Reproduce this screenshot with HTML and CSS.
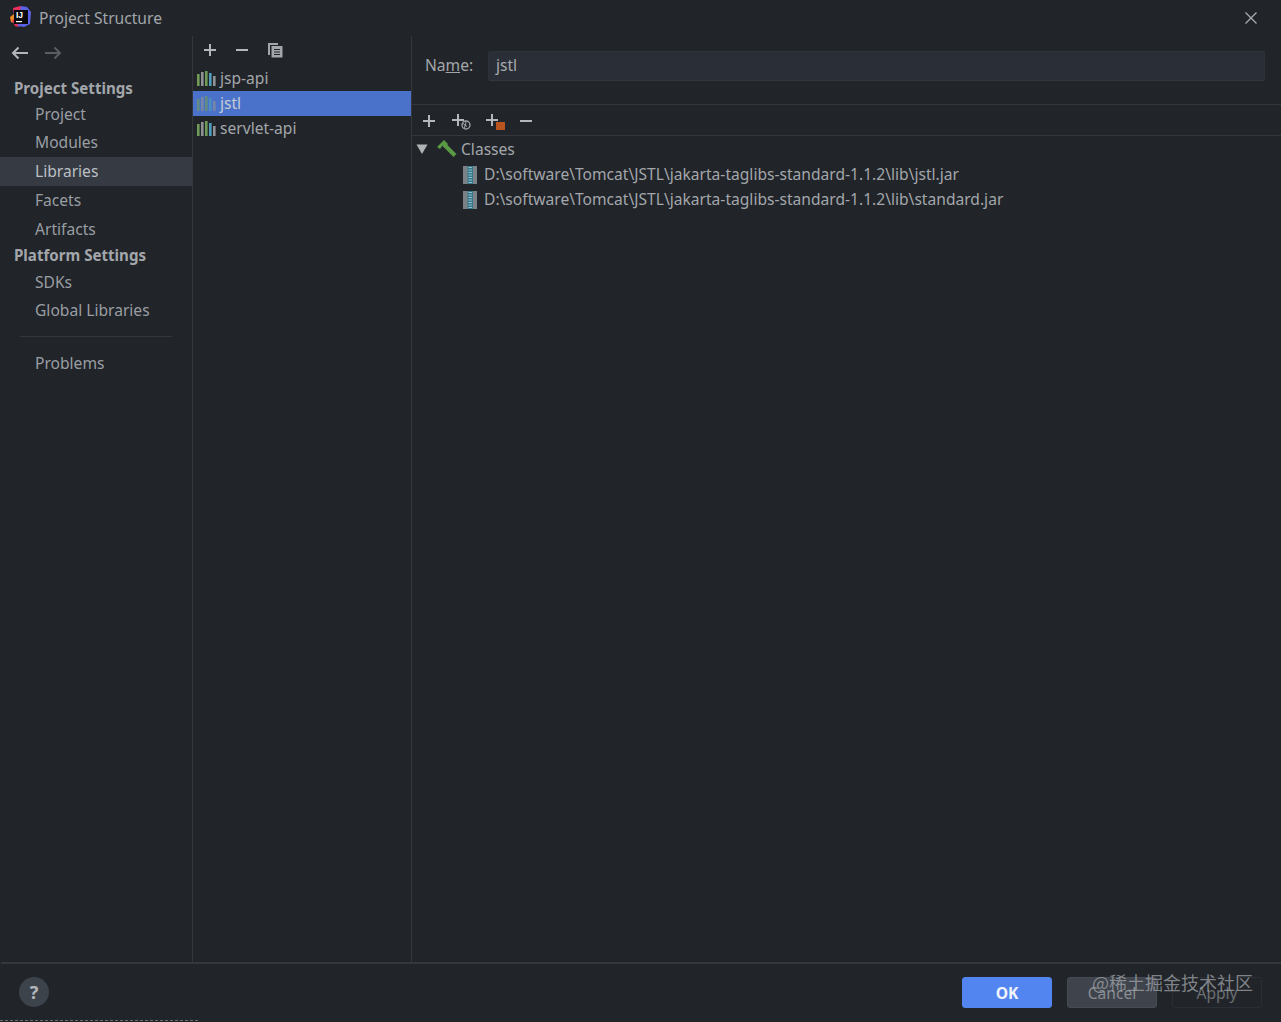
FILE: index.html
```html
<!DOCTYPE html>
<html lang="en">
<head>
<meta charset="utf-8">
<title>Project Structure</title>
<link rel="stylesheet" href="styles.css">
</head>
<body>
<div class="window">
  <header class="titlebar">
    <svg class="logo" width="22" height="22" viewBox="0 0 22 22">
      <path d="M4 2 L11 0 L15 3 L5 9 Z" fill="#e8305f"/>
      <path d="M1 11 L5 8 L6 17 L2 16 Z" fill="#f08a24"/>
      <path d="M12 0 L18 1 L22 6 L21 18 L15 21 L8 20 Z" fill="#5a63e8"/>
      <path d="M3 14 L6 13 L10 21 L6 20 Z" fill="#e8305f"/>
      <rect x="5" y="4" width="14" height="14" fill="#0b0b0d"/>
      <text x="7" y="12" class="logo-text">IJ</text>
      <rect x="7" y="15" width="6" height="1.2" fill="#fff"/>
    </svg>
    <span class="title">Project Structure</span>
    <svg class="close" width="14" height="14" viewBox="0 0 14 14"><path d="M1.5 1.5 L12.5 12.5 M12.5 1.5 L1.5 12.5" stroke="#a9acb0" stroke-width="1.3" fill="none"/></svg>
  </header>
  <main class="main">
    <nav class="nav">
      <div class="nav-arrows">
        <svg width="18" height="14" viewBox="0 0 18 14"><path d="M17 7 H2 M7.5 1.5 L2 7 L7.5 12.5" stroke="#b4b7ba" stroke-width="2" fill="none"/></svg>
        <svg width="18" height="14" viewBox="0 0 18 14"><path d="M1 7 H16 M10.5 1.5 L16 7 L10.5 12.5" stroke="#5a5d61" stroke-width="2" fill="none"/></svg>
      </div>
      <div class="nav-heading first">Project Settings</div>
      <div class="nav-item">Project</div>
      <div class="nav-item">Modules</div>
      <div class="nav-item active">Libraries</div>
      <div class="nav-item">Facets</div>
      <div class="nav-item">Artifacts</div>
      <div class="nav-heading">Platform Settings</div>
      <div class="nav-item short">SDKs</div>
      <div class="nav-item short">Global Libraries</div>
      <div class="nav-sep"></div>
      <div class="nav-item short">Problems</div>
    </nav>
    <section class="libs">
      <div class="libs-tools">
        <svg width="14" height="14" viewBox="0 0 14 14"><path d="M7 1 V13 M1 7 H13" stroke="#b4b7ba" stroke-width="2"/></svg>
        <svg width="14" height="14" viewBox="0 0 14 14"><path d="M1 7 H13" stroke="#b4b7ba" stroke-width="2"/></svg>
        <svg width="16" height="16" viewBox="0 0 16 16"><path d="M1 1 H11 V3 H3 V13 H1 Z" fill="#a3a6aa"/><path d="M4.5 4 H15.5 V15.5 H4.5 Z" fill="#a3a6aa"/><path d="M7 7.5 H13 M7 10 H13 M7 12.5 H13" stroke="#212429" stroke-width="1"/></svg>
      </div>
      <div class="lib-row"><svg class="lib-icon" width="19" height="15" viewBox="0 0 19 15"><use href="#bars"/></svg><span class="lib-name">jsp-api</span></div>
      <div class="lib-row selected"><svg class="lib-icon dim" width="19" height="15" viewBox="0 0 19 15"><use href="#bars"/></svg><span class="lib-name">jstl</span></div>
      <div class="lib-row"><svg class="lib-icon" width="19" height="15" viewBox="0 0 19 15"><use href="#bars"/></svg><span class="lib-name">servlet-api</span></div>
    </section>
    <section class="detail">
      <div class="name-row">
        <label class="name-label">Na<u>m</u>e:</label>
        <div class="name-input">jstl</div>
      </div>
      <div class="tree-tools">
        <svg width="14" height="14" viewBox="0 0 14 14"><path d="M7 1 V13 M1 7 H13" stroke="#b4b7ba" stroke-width="2"/></svg>
        <svg width="20" height="18" viewBox="0 0 20 18"><path d="M7 2 V14 M1 8 H13" stroke="#b4b7ba" stroke-width="2"/><circle cx="15" cy="13" r="4" fill="#212429" stroke="#a3a6aa" stroke-width="1.3"/><path d="M12 11.5 L16 14.5 M15 10 L13.5 16" stroke="#a3a6aa" stroke-width="1"/></svg>
        <svg class="tree-folder" width="20" height="18" viewBox="0 0 20 18"><path d="M7 2 V14 M1 8 H13" stroke="#b4b7ba" stroke-width="2"/><rect x="11" y="10" width="9" height="8" fill="#b9531f"/></svg>
        <svg class="tree-minus" width="14" height="14" viewBox="0 0 14 14"><path d="M1 7 H13" stroke="#b4b7ba" stroke-width="2"/></svg>
      </div>
      <div class="tree-row">
        <svg class="caret" width="12" height="10" viewBox="0 0 12 10"><path d="M0.5 0.5 H11.5 L6 10 Z" fill="#b0b3b6"/></svg>
        <svg class="hammer" width="20" height="18" viewBox="0 0 20 18"><path d="M0 7 L7 0 L11 4 L8 7.5 L5.5 5.5 L3 9 Z" fill="#5a9a45"/><path d="M7 4.5 L18 15.5" stroke="#5a9a45" stroke-width="4"/></svg>
        <span>Classes</span>
      </div>
      <div class="tree-row leaf"><svg class="jar" width="14" height="18" viewBox="0 0 14 18"><use href="#jar"/></svg><span>D:\software\Tomcat\JSTL\jakarta-taglibs-standard-1.1.2\lib\jstl.jar</span></div>
      <div class="tree-row leaf"><svg class="jar" width="14" height="18" viewBox="0 0 14 18"><use href="#jar"/></svg><span>D:\software\Tomcat\JSTL\jakarta-taglibs-standard-1.1.2\lib\standard.jar</span></div>
    </section>
  </main>
  <footer class="footer">
    <div class="help">?</div>
    <div class="buttons">
      <div class="btn primary">OK</div>
      <div class="btn">Cancel</div>
      <div class="btn ghost">Apply</div>
    </div>
  </footer>
</div>
<div class="watermark">@稀土掘金技术社区</div>
<div class="scan-line"></div>
<svg class="defs" width="0" height="0">
  <defs>
    <g id="bars">
      <rect x="0" y="3" width="2.6" height="12" fill="#6f9a57"/>
      <rect x="4" y="1" width="2.6" height="14" fill="#8f9295"/>
      <rect x="8" y="0" width="2.6" height="15" fill="#6f9a57"/>
      <rect x="12" y="2" width="2.6" height="13" fill="#4f9dbd"/>
      <rect x="16" y="5" width="2.6" height="10" fill="#8f9295"/>
    </g>
    <g id="jar">
      <rect x="0" y="0" width="14" height="18" fill="#7a8187"/>
      <rect x="4.5" y="0" width="5.5" height="18" fill="#37788a"/>
      <path d="M5.5 1.5 H9 M5.5 4 H9 M5.5 6.5 H9 M5.5 9 H9 M5.5 11.5 H9 M5.5 14 H9 M5.5 16.5 H9" stroke="#8fc0cc" stroke-width="1"/>
    </g>
  </defs>
</svg>
</body>
</html>
```

FILE: styles.css
```css
* { box-sizing: border-box; }
html, body { margin: 0; padding: 0; background: #212429; }
body {
  font-family: "Noto Sans", "Open Sans", sans-serif;
  font-size: 15.6px;
  color: #a7abaf;
  width: 1281px;
  height: 1022px;
  overflow: hidden;
  position: relative;
}
.window { display: flex; flex-direction: column; height: 1022px; }

.titlebar { height: 36px; display: flex; align-items: center; padding-left: 9px; flex: none; }
.logo { flex: none; margin-top: -2px; }
.logo-text { font-family: "Liberation Sans", sans-serif; font-size: 8.5px; font-weight: 700; fill: #fff; }
.title { margin-left: 8px; color: #a2a6aa; }
.close { margin-left: auto; margin-right: 23px; }

.main { flex: none; display: flex; min-height: 0; height: 926px; }
.nav { width: 193px; flex: none; border-right: 1px solid #34383e; }
.nav-arrows { height: 39px; display: flex; align-items: center; gap: 15px; padding: 0 0 6px 11px; }
.nav-heading { padding-left: 14px; font-size: 15.1px; font-weight: 700; color: #a3a7ab; height: 23.5px; line-height: 25px; }
.nav-heading.first { height: 24.5px; line-height: 26px; }
.nav-item { padding-left: 35px; height: 28.75px; line-height: 29.75px; color: #9a9ea3; }
.nav-item.short { height: 28px; line-height: 30px; }
.nav-item.active { background: #353a43; color: #bcc0c4; }
.nav-sep { height: 1px; margin: 13px 20px 11px 20px; background: #34383e; }

.libs { width: 219px; flex: none; border-right: 1px solid #34383e; }
.libs-tools { height: 30px; display: flex; align-items: center; gap: 18px; padding: 0 0 3px 10px; }
.lib-row { height: 25px; display: flex; align-items: center; padding-left: 4px; color: #a3a7ab; }
.lib-row.selected { background: #4a72ca; color: #c5cad4; }
.lib-icon { margin-right: 4px; flex: none; margin-top: -1px; }
.lib-icon.dim { opacity: 0.65; }
.lib-name { margin-top: -2px; }

.detail { flex: 1; min-width: 0; }
.name-row { height: 69px; padding: 15px 16px 0 13px; display: flex; align-items: flex-start; border-bottom: 1px solid #34383e; }
.name-label { width: 63px; flex: none; line-height: 28px; color: #a3a7ab; }
.name-input { flex: 1; height: 30px; line-height: 26px; padding-left: 7px; background: #2a2e36; border: 1px solid #2d3139; border-bottom-color: #34383e; color: #a7abaf; border-radius: 2px; }
.tree-tools { height: 31px; display: flex; align-items: center; padding: 2px 0 0 10px; gap: 15px; border-bottom: 1px solid #34383e; }
.tree-tools .tree-folder { margin-left: -1px; }
.tree-tools .tree-minus { margin-left: -1px; }
.tree-row { height: 25px; display: flex; align-items: center; color: #a3a7ab; }
.caret { margin-left: 4px; flex: none; }
.hammer { margin-left: 9px; margin-right: 4px; flex: none; }
.leaf { padding-left: 51px; }
.jar { margin-right: 7px; flex: none; margin-top: 2px; }

.footer { height: 60px; flex: none; border-top: 2px solid #34383e; display: flex; align-items: center; padding: 0 19px 2px 18px; margin-left: 1px; }
.help { width: 30px; height: 30px; border-radius: 50%; background: #3d434b; color: #b4b7ba; font-size: 18px; font-weight: 700; text-align: center; line-height: 30px; }
.buttons { margin-left: auto; display: flex; gap: 15px; }
.btn { width: 90px; height: 31px; line-height: 31px; text-align: center; border-radius: 3px; background: #3e434c; border: 1px solid #464b53; color: #8a8e93; }
.btn.primary { background: #5385f0; border-color: #5385f0; color: #f0f4fb; font-weight: 700; }
.btn.ghost { background: #212429; border-color: #2b2f35; color: #6b6f74; }

.watermark { position: absolute; left: 1092px; top: 969px; font-family: "Noto Sans CJK SC", sans-serif; font-size: 18px; line-height: 26px; color: rgba(170, 174, 178, 0.7); white-space: nowrap; }
.scan-line { position: absolute; left: 0; bottom: 1px; width: 200px; height: 1px; background: repeating-linear-gradient(90deg, #6a6d70 0 3px, transparent 3px 5px); }
.defs { position: absolute; }
```
